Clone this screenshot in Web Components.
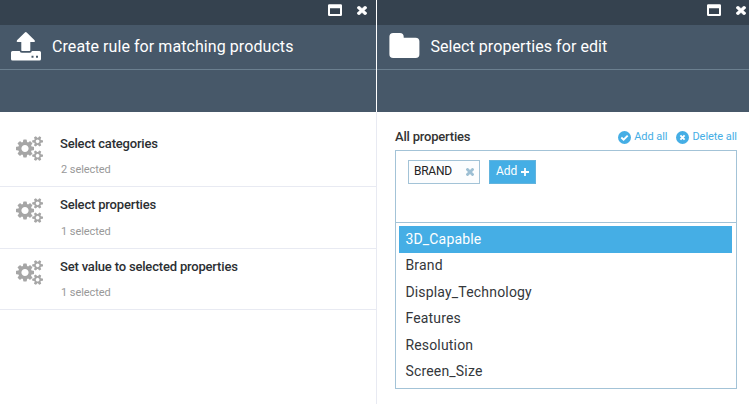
<!DOCTYPE html>
<html lang="en">
<head>
<meta charset="utf-8">
<title>Rule editor</title>
<style>
html,body{margin:0;height:100%}
body{background:#fff;font-family:Roboto,"Liberation Sans",sans-serif;overflow:hidden}
</style>
</head>
<body>
<rule-workspace></rule-workspace>
<script>
const ICONS={
cogs:['0 0 1920 1792','<path d="M896 896q0-106-75-181t-181-75-181 75-75 181 75 181 181 75 181-75 75-181zm768 512q0-52-38-90t-90-38-90 38-38 90q0 53 37.5 90.5t90.5 37.5 90.5-37.5 37.5-90.5zm0-1024q0-52-38-90t-90-38-90 38-38 90q0 53 37.5 90.5t90.5 37.5 90.5-37.5 37.5-90.5zm-384 421v185q0 10-7 19.5t-16 10.5l-155 24q-11 35-32 76 34 48 90 115 7 11 7 20 0 12-7 19-23 30-82.5 89.5t-78.5 59.5q-11 0-21-7l-115-90q-37 19-77 31-11 108-23 155-7 24-30 24h-186q-11 0-20-7.5t-10-17.5l-23-153q-34-10-75-31l-118 89q-7 7-20 7-11 0-21-8-144-133-144-160 0-9 7-19 10-14 41-53t47-61q-23-44-35-82l-152-24q-10-1-17-9.5t-7-19.5v-185q0-10 7-19.5t16-10.5l155-24q11-35 32-76-34-48-90-115-7-11-7-20 0-12 7-20 22-30 82-89t79-59q11 0 21 7l115 90q34-18 77-32 11-108 23-154 7-24 30-24h186q11 0 20 7.5t10 17.5l23 153q34 10 75 31l118-89q8-7 20-7 11 0 21 8 144 133 144 160 0 8-7 19-12 16-42 54t-45 60q23 48 34 82l152 23q10 2 17 10.5t7 19.5zm640 533v140q0 16-149 31-12 27-30 52 51 113 51 138 0 4-4 7-122 71-124 71-8 0-46-47t-52-68q-20 2-30 2t-30-2q-14 21-52 68t-46 47q-2 0-124-71-4-3-4-7 0-25 51-138-18-25-30-52-149-15-149-31v-140q0-16 149-31 13-29 30-52-51-113-51-138 0-4 4-7 4-2 35-20t59-34 30-16q8 0 46 46.5t52 67.5q20-2 30-2t30 2q51-71 92-112l6-2q4 0 124 70 4 3 4 7 0 25-51 138 17 23 30 52 149 15 149 31zm0-1024v140q0 16-149 31-12 27-30 52 51 113 51 138 0 4-4 7-122 71-124 71-8 0-46-47t-52-68q-20 2-30 2t-30-2q-14 21-52 68t-46 47q-2 0-124-71-4-3-4-7 0-25 51-138-18-25-30-52-149-15-149-31v-140q0-16 149-31 13-29 30-52-51-113-51-138 0-4 4-7 4-2 35-20t59-34 30-16q8 0 46 46.5t52 67.5q20-2 30-2t30 2q51-71 92-112l6-2q4 0 124 70 4 3 4 7 0 25-51 138 17 23 30 52 149 15 149 31z"/>'],
times:['302 366 1188 1188','<path stroke="currentColor" stroke-width="50" d="M1490 1322q0 40-28 68l-136 136q-28 28-68 28t-68-28l-294-294-294 294q-28 28-68 28t-68-28l-136-136q-28-28-28-68t28-68l294-294-294-294q-28-28-28-68t28-68l136-136q28-28 68-28t68 28l294 294 294-294q28-28 68-28t68 28l136 136q28 28 28 68t-28 68l-294 294 294 294q28 28 28 68z"/>'],
win:['0 0 14 12','<path fill-rule="evenodd" d="M1.3.2h11.400Q14 .2 14 1.500v9.200q0 1.300-1.300 1.300H1.300Q0 12 0 10.700V1.500Q0 .2 1.300.2zM2 4.300v5.700h10V4.300z"/>'],
upload:['0 0 30 29','<path d="M14.800 0Q15.300 0 15.700.4L23.600 8.200Q24.800 9.800 23 9.900H19.300V18.300Q19.300 19 18.600 19H11Q10.300 19 10.300 18.300V9.900H6.500Q5 9.800 6 8.200L13.900.4Q14.300 0 14.800 0z"/><path fill-rule="evenodd" d="M1.500 18.900H8.700Q9.200 20.800 11.100 20.800H18.600Q20.300 20.800 20.900 18.900H28.500Q30 18.900 30 20.400V27Q30 28.500 28.500 28.500H1.500Q0 28.500 0 27V20.400Q0 18.900 1.500 18.900zM20.500 23.700v2h2v-2zM25 23.700v2h2v-2z"/>'],
folder:['-.4 0 31 25','<path d="M3.800 0H10.500Q14.300 0 14.300 3.800V4.700H26.200Q30 4.700 30 8.500V21.200Q30 25 26.200 25H3.800Q0 25 0 21.200V3.800Q0 0 3.800 0z"/>'],
check:['0 0 13 13','<circle cx="6.500" cy="6.500" r="6.500"/><path d="M3.300 6.500 5.600 8.700 9.700 4.600" fill="none" stroke="#fff" stroke-width="1.900"/>'],
cross:['0 0 13 13','<circle cx="6.500" cy="6.500" r="6.500"/><path d="M4.400 4.400 8.600 8.600M8.600 4.400 4.400 8.600" fill="none" stroke="#fff" stroke-width="1.900"/>'],
plus:['0 0 8 8','<path d="M3.100 0h1.800v3.100H8v1.800H4.900V8H3.100V4.900H0V3.100h3.100z"/>']
};
const define=(name,html)=>customElements.define(name,class extends HTMLElement{
  constructor(){super();const t=document.createElement('template');t.innerHTML=html;this.attachShadow({mode:'open'}).append(t.content.cloneNode(true));}
});
customElements.define('ui-icon',class extends HTMLElement{
  connectedCallback(){
    if(this.shadowRoot)return;
    const [box,body]=ICONS[this.getAttribute('name')];
    this.attachShadow({mode:'open'}).innerHTML=`<style>:host{display:block;flex:none}svg{display:block;width:100%;height:100%;fill:currentColor}</style><svg viewBox="${box}" preserveAspectRatio="none" aria-hidden="true">${body}</svg>`;
  }
});
define('panel-window',`<style>
:host{display:flex;flex-direction:column;min-width:0;background:#fff}
.bar{height:25px;background:#35424f;display:flex;justify-content:flex-end;gap:15px;padding:4px var(--bar-right,9px) 0 0;box-sizing:border-box;color:#fff}
.win{width:14px;height:12px}.x{width:10px;height:9px;margin-top:2px}
header{height:45px;box-sizing:border-box;background:#475869;border-bottom:1px solid #6b7f8f;display:flex;padding-left:var(--head-left,11px);color:#fff}
.icon{width:30px;padding-top:var(--icon-top,7px)}
h1{font-size:16px;line-height:20px;font-weight:400;letter-spacing:.07px;margin:12px 0 0 var(--title-left,11px);white-space:nowrap}
.tools{height:42px;background:#475869}
main{flex:1}
</style>
<div class="bar"><ui-icon class="win" name="win"></ui-icon><ui-icon class="x" name="times"></ui-icon></div>
<header><div class="icon"><slot name="icon"></slot></div><h1><slot name="title"></slot></h1></header>
<div class="tools"></div><main><slot></slot></main>`);
define('rule-step',`<style>
:host{display:flex;height:var(--row,62px);box-sizing:border-box;border-bottom:1px solid #e8eaf2;padding-left:16px}
ui-icon{width:27px;height:25px;color:#a6a6a6;margin-top:11px}
.text{margin-left:17px}
.title{font-size:13px;line-height:16px;font-weight:500;letter-spacing:-.18px;color:#2c2f33;margin-top:var(--title-top,10px);white-space:nowrap}
.sub{font-size:11px;line-height:14px;letter-spacing:-.07px;color:#999;margin:var(--sub-top,11px) 0 0 1px}
</style><ui-icon name="cogs"></ui-icon><div class="text"><div class="title"><slot></slot></div><div class="sub"><slot name="sub"></slot></div></div>`);
define('text-action',`<style>:host{display:flex;gap:3px;color:#45aee5;font-size:11px;line-height:14px;letter-spacing:-.05px;white-space:nowrap}span{padding-top:2px}</style><slot name="icon"></slot><span><slot></slot></span>`);
define('value-chip',`<style>:host{display:flex;box-sizing:border-box;width:72px;height:24px;border:1px solid #a3c3d7;background:#fcfdfe;padding:3px 5px 0;justify-content:space-between;font-size:12px;line-height:15px;letter-spacing:-.25px;color:#222}ui-icon{width:8px;height:8px;color:#9dbfd4;margin-top:4px}</style><span><slot></slot></span><ui-icon name="times"></ui-icon>`);
define('add-button',`<style>:host{display:flex;box-sizing:border-box;width:47px;height:24px;border:1px solid #62b4de;background:#45aee5;color:#fff;padding:3px 6px 0;justify-content:space-between;font-size:12px;line-height:15px}ui-icon{width:8px;height:8px;margin-top:4px}</style><span><slot></slot></span><ui-icon name="plus"></ui-icon>`);
define('pick-option',`<style>:host{display:block;box-sizing:border-box;height:26.500px;padding-left:6.400px;font-size:14px;line-height:25.400px;letter-spacing:.18px;color:#34373b}:host(:nth-child(odd)){line-height:26px}:host([selected]){background:#45aee5;color:#fff}</style><slot></slot>`);
define('property-picker',`<style>
:host{display:block;padding:16px 12px 0 18px}
.head{display:flex;height:22px;justify-content:space-between}
.label{font-size:13px;line-height:17px;font-weight:500;letter-spacing:-.2px;color:#333}
.actions{display:flex;gap:9px}
.actions ui-icon{width:13px;height:13px;margin-top:3px}
.box{height:239px;box-sizing:border-box;border:1px solid #a3c3d7}
.chips{height:72px;box-sizing:border-box;border-bottom:1px solid #a3c3d7;display:flex;gap:9px;padding:9px 12px}
.list{padding:3px 4px 0 3px}
</style>
<div class="head"><div class="label">All properties</div><div class="actions">
<text-action>Add all<ui-icon slot="icon" name="check"></ui-icon></text-action>
<text-action>Delete all<ui-icon slot="icon" name="cross"></ui-icon></text-action></div></div>
<div class="box"><div class="chips"><value-chip>BRAND</value-chip><add-button>Add</add-button></div>
<div class="list"><slot></slot></div></div>`);
define('rule-workspace',`<style>
:host{display:grid;grid-template-columns:376px 372px;column-gap:1px;height:404px;background:linear-gradient(#fff 112px,#e8eaf2 112px)}
.right{--bar-right:3px;--head-left:12px;--icon-top:8px;--title-left:11.400px}
.steps{padding-top:13px}
</style>
<panel-window><ui-icon slot="icon" name="upload" style="width:30px;height:29px"></ui-icon><span slot="title">Create rule for matching products</span>
<div class="steps"><rule-step style="--title-top:11px">Select categories<span slot="sub">2 selected</span></rule-step><rule-step style="--sub-top:12px">Select properties<span slot="sub">1 selected</span></rule-step><rule-step style="--row:61px">Set value to selected properties<span slot="sub">1 selected</span></rule-step></div></panel-window>
<panel-window class="right"><ui-icon slot="icon" name="folder" style="width:31px;height:25px"></ui-icon><span slot="title">Select properties for edit</span>
<property-picker><pick-option selected>3D_Capable</pick-option><pick-option>Brand</pick-option><pick-option>Display_Technology</pick-option><pick-option>Features</pick-option><pick-option>Resolution</pick-option><pick-option>Screen_Size</pick-option></property-picker></panel-window>`);
</script>
</body>
</html>
